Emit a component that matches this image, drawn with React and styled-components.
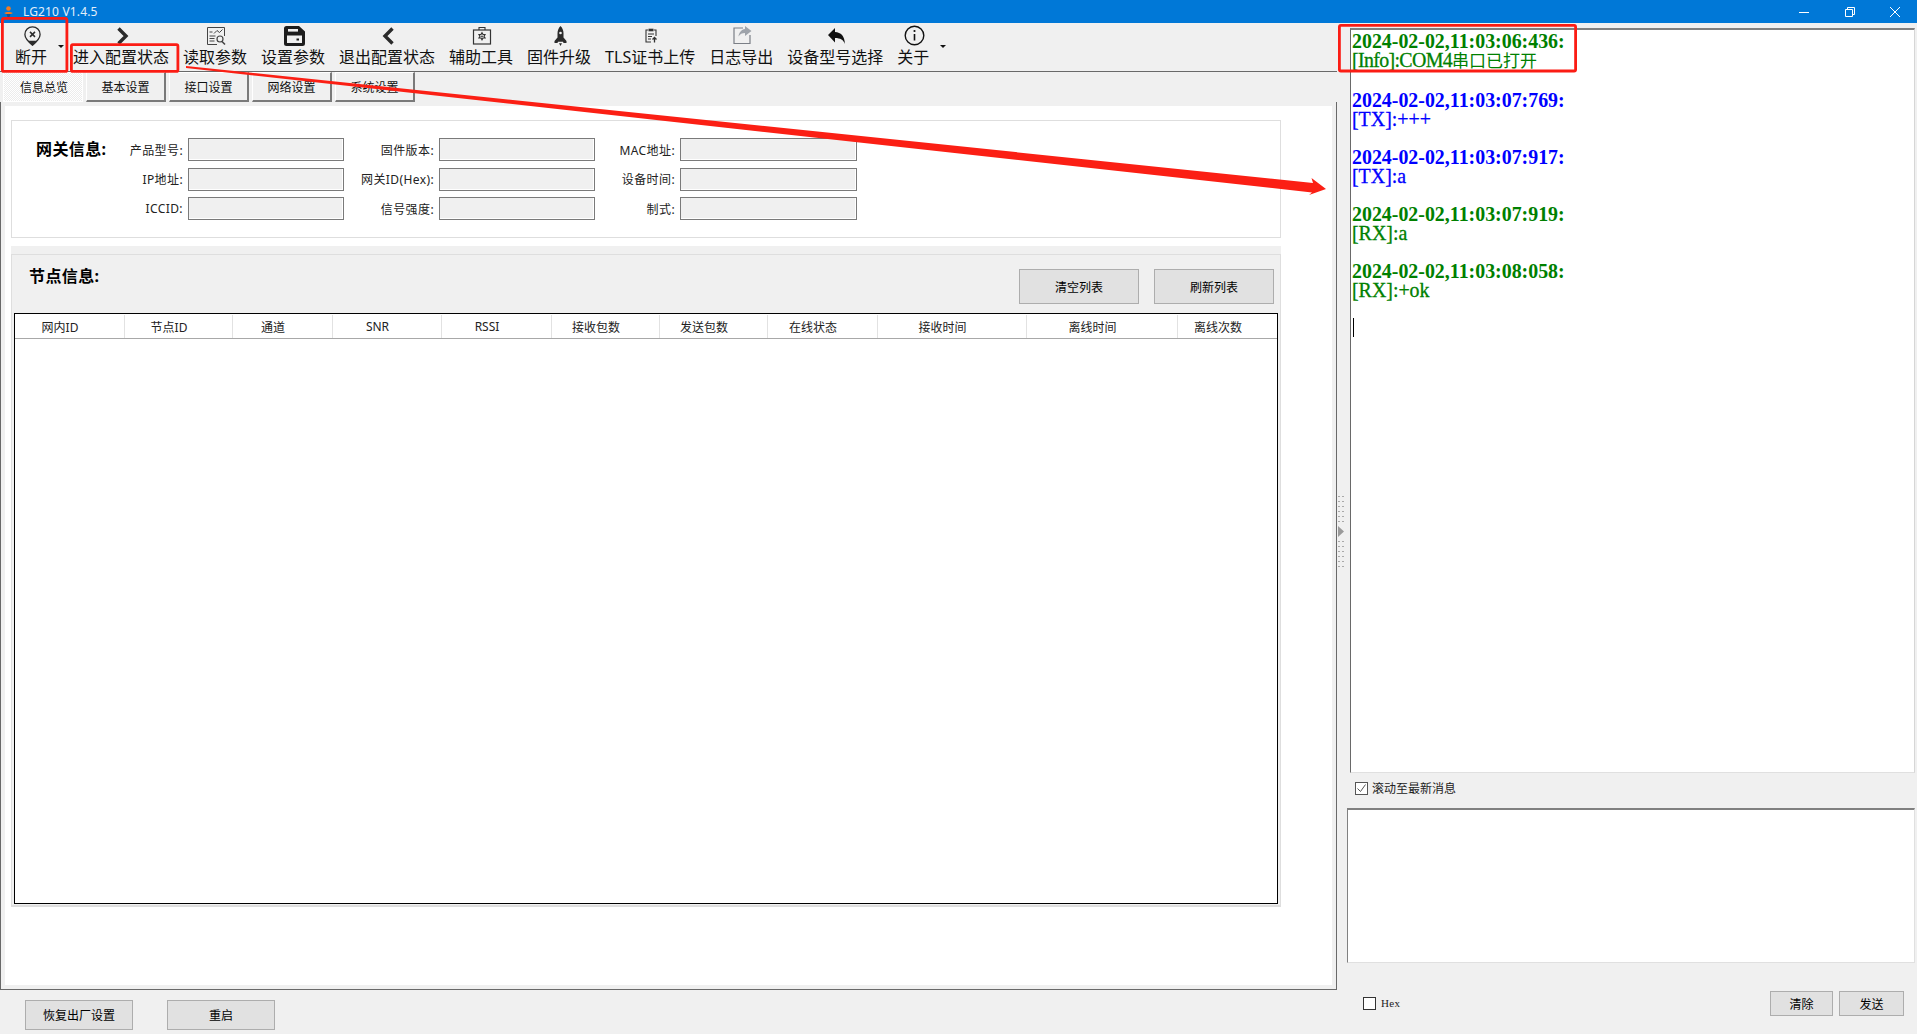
import React from "react";
import styled, { createGlobalStyle } from "styled-components";

const UI = `"Noto Sans", "Noto Sans CJK SC", sans-serif`;

const Global = createGlobalStyle`
  html, body { margin: 0; padding: 0; overflow: hidden; background: #f0f0f0; }
  * { box-sizing: border-box; }
`;

const Window = styled.div`
  position: relative;
  width: 1917px;
  height: 1034px;
  display: flex;
  flex-direction: column;
  background: #f0f0f0;
  font-family: ${UI};
  color: #000;
  overflow: hidden;
`;

/* ---------- title bar ---------- */
const TitleBar = styled.header`
  height: 23px;
  flex: none;
  display: flex;
  align-items: center;
  background: #0078d7;
  padding-left: 4px;
`;
const TitleText = styled.span`
  margin-left: 10px;
  font-size: 12px;
  line-height: 23px;
  letter-spacing: 0.15px;
  color: #e3effa;
`;
const WindowButtons = styled.div`
  margin-left: auto;
  display: flex;
  gap: 35.5px;
  padding-right: 17px;
`;
const WinIcon = styled.svg`
  width: 10px;
  height: 10px;
  display: block;
  fill: none;
  stroke: #fff;
  stroke-width: 1;
`;

/* ---------- main layout ---------- */
const Body = styled.div`
  flex: 1;
  display: flex;
  min-height: 0;
`;
const LeftPane = styled.section`
  width: 1337px;
  flex: none;
  display: flex;
  flex-direction: column;
`;
const RightPane = styled.section`
  flex: 1;
  display: flex;
  flex-direction: column;
  min-width: 0;
`;

/* ---------- toolbar ---------- */
const Toolbar = styled.nav`
  height: 49px;
  flex: none;
  display: flex;
  align-items: flex-start;
  gap: 14px;
  padding: 2px 0 0 15px;
  border-bottom: 1px solid #696969;
`;
const ToolItem = styled.div`
  display: flex;
  flex-direction: column;
  align-items: center;
  white-space: nowrap;
`;
const ToolIconSlot = styled.div`
  height: 21px;
  padding-left: 2px;
  display: flex;
  align-items: center;
  justify-content: center;
`;
const ToolLabel = styled.span`
  font-size: 16px;
  line-height: 22px;
  color: #111;
`;
const Caret = styled.span`
  width: 0;
  height: 0;
  margin: 20px -5px 0 -3px;
  border-left: 3px solid transparent;
  border-right: 3px solid transparent;
  border-top: 3px solid #111;
`;
const Glyph = styled.svg`
  display: block;
`;

/* ---------- tabs ---------- */
const TabStrip = styled.div`
  height: 30px;
  flex: none;
  display: flex;
  gap: 3px;
  padding-left: 3px;
`;
const Tab = styled.div`
  width: 80px;
  height: 30px;
  display: flex;
  align-items: center;
  justify-content: center;
  padding-left: ${(p) => (p.$active ? "2px" : "0")};
  font-size: 12px;
  color: #111;
  background: ${(p) =>
    p.$active
      ? "repeating-conic-gradient(#fff 0 25%, #ececec 0 50%) 0 0 / 2px 2px"
      : "#f0f0f0"};
  border-top: 1px solid #fff;
  border-left: 1px solid #fff;
  border-right: ${(p) => (p.$active ? "1px solid #fff" : "2px solid #7a7a7a")};
  border-bottom: ${(p) => (p.$active ? "1px solid #fff" : "2px solid #7a7a7a")};
`;

/* ---------- content panel ---------- */
const Panel = styled.main`
  height: 888px;
  flex: none;
  padding: 4px 4px 4px 4px;
  border: 1px solid #696969;
  border-top: none;
`;
const PanelSheet = styled.div`
  height: 100%;
  background: #fff;
  padding: 14px 51px 0 6px;
  display: flex;
  flex-direction: column;
  gap: 8px;
`;

const GatewayBox = styled.div`
  height: 118px;
  flex: none;
  display: flex;
  padding: 17px 0 0 24px;
  border: 1px solid #dedede;
`;
const GroupTitle = styled.h2`
  margin: -1px 0 0;
  font-size: 16px;
  font-weight: 700;
  line-height: 24px;
  letter-spacing: 0.4px;
  white-space: nowrap;
  color: #000;
`;
const GatewayTitleCell = styled.div`
  width: 79px;
  flex: none;
`;
const FieldGrid = styled.div`
  display: grid;
  grid-template-columns: 73px 156px 95px 156px 85px 177px;
  grid-auto-rows: 23px;
  row-gap: 6.5px;
`;
const FieldLabel = styled.label`
  display: flex;
  align-items: center;
  justify-content: flex-end;
  padding-right: 5px;
  font-size: 12px;
  letter-spacing: 0.4px;
  white-space: nowrap;
  color: #222;
`;
const FieldInput = styled.div`
  background: #f0f0f0;
  border: 1px solid #7a7a7a;
  box-shadow: inset -1px -1px 0 #fff;
`;

const NodeSection = styled.div`
  height: 661px;
  flex: none;
  padding-top: 8px;
  background: #f0f0f0;
`;
const NodeInner = styled.div`
  height: 100%;
  padding: 0 2px 1px 2px;
  border: 1px solid #dedede;
  border-bottom: 2px solid #dedede;
  display: flex;
  flex-direction: column;
`;
const NodeHead = styled.div`
  height: 58px;
  flex: none;
  display: flex;
  align-items: flex-start;
  padding: 10px 4px 0 15px;
`;
const NodeButtons = styled.div`
  margin-left: auto;
  display: flex;
  gap: 15px;
  margin-top: 4px;
`;
const ActionButton = styled.button`
  width: ${(p) => p.$w}px;
  height: ${(p) => p.$h}px;
  padding: 0;
  background: #e1e1e1;
  border: 1px solid #adadad;
  border-radius: 0;
  font-family: ${UI};
  font-size: 12px;
  color: #000;
`;
const NodeTable = styled.div`
  flex: 1;
  background: #fff;
  border: 1px solid #000;
  padding-top: 1px;
`;
const HeaderRow = styled.div`
  height: 24px;
  display: grid;
  grid-template-columns: 110px 108px 100px 109px 110px 108px 108px 110px 149px 151px 1fr;
  border-bottom: 1px solid #a8a8a8;
`;
const HeaderCell = styled.div`
  display: flex;
  align-items: center;
  justify-content: center;
  padding-right: 19px;
  font-size: 12px;
  color: #222;
  border-right: 1px solid #e2e2e2;
  &:last-child { border-right: none; }
`;

/* ---------- left footer ---------- */
const LeftFooter = styled.footer`
  flex: 1;
  display: flex;
  gap: 34px;
  padding: 10px 0 0 25px;
`;

/* ---------- right side ---------- */
const LogRow = styled.div`
  height: 750px;
  flex: none;
  display: flex;
  padding-top: 5px;
`;
const Splitter = styled.div`
  width: 13px;
  flex: none;
  padding-top: 468px;
`;
const Log = styled.div`
  flex: 1;
  margin-right: 2px;
  padding: 2px 0 0 1px;
  background: #fff;
  border-top: 2px solid #808080;
  border-left: 1px solid #696969;
  border-right: 1px solid #d6d6d6;
  border-bottom: 1px solid #e0e0e0;
  font-family: "Liberation Serif", "Noto Sans CJK SC", serif;
  font-size: 19.9px;
  line-height: 19px;
`;
const Entry = styled.div`
  margin-top: 19px;
  color: ${(p) => (p.$tx ? "#0000ff" : "#008000")};
  white-space: nowrap;
  &:first-child { margin-top: 0; }
  &:nth-child(2) { margin-top: 21px; }
`;
const Stamp = styled.div`
  font-weight: 700;
`;
const Message = styled.div`
  -webkit-text-stroke: 0.3px currentColor;
  letter-spacing: ${(p) => (p.$tight ? "-0.65px" : "0")};
`;
const CjkRun = styled.span`
  font-family: "Noto Sans CJK SC", sans-serif;
  font-size: 17px;
  line-height: 0;
  letter-spacing: 0;
  -webkit-text-stroke: 0;
`;
const Cursor = styled.div`
  width: 1px;
  height: 19px;
  margin: 18px 0 0 1px;
  background: #000;
`;
const ScrollRow = styled.div`
  height: 35px;
  flex: none;
  display: flex;
  align-items: flex-start;
  gap: 4px;
  padding: 9px 0 0 18px;
`;
const CheckBox = styled.span`
  width: 13px;
  height: 13px;
  flex: none;
  background: #fff;
  border: 1px solid ${(p) => (p.$checked ? "#555" : "#333")};
  display: flex;
  align-items: center;
  justify-content: center;
`;
const CheckText = styled.span`
  font-size: 12px;
  line-height: 13px;
  color: #222;
`;
const SendBox = styled.div`
  height: 155px;
  flex: none;
  margin: 0 2px 0 10px;
  background: #fff;
  border-top: 2px solid #808080;
  border-left: 1px solid #808080;
  border-right: 1px solid #e0e0e0;
  border-bottom: 1px solid #e0e0e0;
`;
const SendRow = styled.div`
  flex: 1;
  display: flex;
  align-items: flex-start;
  padding: 28px 13px 0 26px;
`;
const HexOption = styled.div`
  display: flex;
  align-items: center;
  gap: 5px;
  padding-top: 6px;
`;
const HexText = styled.span`
  font-family: "Liberation Serif", serif;
  font-size: 11px;
  line-height: 13px;
  letter-spacing: 0.3px;
  color: #222;
`;
const SendButtons = styled.div`
  margin-left: auto;
  display: flex;
  gap: 6px;
`;

/* ---------- annotations ---------- */
const Annotations = styled.svg`
  position: absolute;
  left: 0;
  top: 0;
  width: 1917px;
  height: 1034px;
  pointer-events: none;
`;

/* ---------- icons ---------- */
const ink = "#2b2b2b";
const icons = {
  pin: (
    <Glyph width="17" height="20" viewBox="0 0 17 20" fill="none" stroke={ink}>
      <path strokeWidth="1.300" d="M8.500.8a7.600 7.600 0 0 1 7.600 7.600c0 3.400-3.600 7.400-7.600 10.800C4.500 15.800.9 11.800.9 8.400A7.600 7.600 0 0 1 8.500.8z" />
      <path fill={ink} stroke="none" d="M4.200 14.800h8.600L8.500 19.500z" />
      <path strokeWidth="1.500" d="M6 5.900l5 5M11 5.900l-5 5" />
    </Glyph>
  ),
  next: (
    <Glyph width="13" height="18" viewBox="0 0 13 18" fill="none" stroke={ink}>
      <path strokeWidth="3.400" d="M2.500 1.500l7.500 7.500-7.500 7.500" />
    </Glyph>
  ),
  report: (
    <Glyph width="20" height="20" viewBox="0 0 20 20" fill="none" stroke="#444">
      <path strokeWidth="1" d="M11 18.500H1.500v-17h17V10" />
      <path strokeWidth="1" d="M8 7.500l3-3 2.500 2 3-3" />
      <path strokeWidth="1" d="M3.500 6h3M3.500 10h6M3.500 12.500h5M3.500 15h5" />
      <circle cx="14" cy="13" r="3" strokeWidth="1.200" />
      <path strokeWidth="1.600" d="M16 15.500l3 3" />
    </Glyph>
  ),
  save: (
    <Glyph width="21" height="20" viewBox="0 0 21 20">
      <path fill="#1d1d1d" d="M2.500 0H15l6 5.500v12a2.500 2.500 0 0 1-2.500 2.500h-16A2.500 2.500 0 0 1 0 17.500v-15A2.500 2.500 0 0 1 2.500 0z" />
      <rect x="4" y="3" width="10" height="2.600" fill="#f0f0f0" />
      <rect x="3" y="9.500" width="15" height="7.500" fill="#f0f0f0" />
      <rect x="12.500" y="12.500" width="2.500" height="2" fill="#1d1d1d" />
    </Glyph>
  ),
  prev: (
    <Glyph width="13" height="18" viewBox="0 0 13 18" fill="none" stroke={ink}>
      <path strokeWidth="3.400" d="M10.500 1.500L3 9l7.500 7.500" />
    </Glyph>
  ),
  tools: (
    <Glyph width="20" height="19" viewBox="0 0 20 19" fill="none" stroke="#333">
      <path strokeWidth="1.100" d="M7 4V1.500h6V4" />
      <rect x="1.500" y="4" width="17" height="14" strokeWidth="1.200" />
      <path strokeWidth="1.200" d="M10 6.800l1 1.700h2l-1 1.800 1 1.700h-2l-1 1.700-1-1.700H7l1-1.700-1-1.800h2z" />
      <circle cx="10" cy="10.300" r="0.900" fill="#333" stroke="none" />
    </Glyph>
  ),
  rocket: (
    <Glyph width="13" height="20" viewBox="0 0 13 20">
      <path fill="#2a2a2a" d="M6.500 0c2 2 3 4.500 3 7.500v4l3 3.500v2H9.500l-.5-1.200H4L3.500 17H.5v-2l3-3.500v-4C3.500 4.500 4.500 2 6.500 0z" />
      <circle cx="6.500" cy="7" r="1.300" fill="#f0f0f0" />
      <path fill="#2a2a2a" d="M5 17.200h3L6.500 20z" />
    </Glyph>
  ),
  cert: (
    <Glyph width="12" height="15" viewBox="0 0 12 15" fill="none" stroke="#333">
      <path strokeWidth="1.100" d="M3 2H1v12h5M9 2h2v6" />
      <rect x="3.500" y="0.700" width="5" height="2.600" fill="#333" stroke="none" />
      <path strokeWidth="1" d="M3 6h6M3 8.500h4M3 11h3" />
      <path strokeWidth="1.300" d="M9.500 9.500v5M7.500 11.500l2-2 2 2" />
    </Glyph>
  ),
  export: (
    <Glyph width="19" height="19" viewBox="0 0 19 19" fill="none">
      <path stroke="#7b7f86" strokeWidth="1.200" d="M10 2H1v15.500h16V9" />
      <path fill="#9ea3aa" d="M12 0l6.500 5-6.500 5V7C9 7 7 8 5.500 10.500 6 6.500 8.500 3.500 12 3z" />
    </Glyph>
  ),
  back: (
    <Glyph width="17" height="16" viewBox="0 0 17 16">
      <path fill="#111" d="M7 0v4c6 .3 9.500 4 10 12-1.500-4-4.500-6-10-6v4.500L0 7z" />
    </Glyph>
  ),
  info: (
    <Glyph width="21" height="21" viewBox="0 0 21 21" fill="none" stroke="#111">
      <circle cx="10.500" cy="10.500" r="9.300" strokeWidth="1.400" />
      <circle cx="10.500" cy="6" r="1.100" fill="#111" stroke="none" />
      <path strokeWidth="1.600" d="M10.500 9v6.500" />
    </Glyph>
  ),
};

const tools = [
  { key: "pin", label: "断开", caret: true },
  { key: "next", label: "进入配置状态" },
  { key: "report", label: "读取参数" },
  { key: "save", label: "设置参数" },
  { key: "prev", label: "退出配置状态" },
  { key: "tools", label: "辅助工具" },
  { key: "rocket", label: "固件升级" },
  { key: "cert", label: "TLS证书上传" },
  { key: "export", label: "日志导出" },
  { key: "back", label: "设备型号选择" },
  { key: "info", label: "关于", caret: true },
];

const tabs = ["信息总览", "基本设置", "接口设置", "网络设置", "系统设置"];

const fields = [
  "产品型号:", "固件版本:", "MAC地址:",
  "IP地址:", "网关ID(Hex):", "设备时间:",
  "ICCID:", "信号强度:", "制式:",
];

const columns = ["网内ID", "节点ID", "通道", "SNR", "RSSI", "接收包数", "发送包数", "在线状态", "接收时间", "离线时间", "离线次数"];

const logs = [
  { stamp: "2024-02-02,11:03:06:436:", body: <>[Info]:COM4<CjkRun>串口已打开</CjkRun></>, tight: true },
  { stamp: "2024-02-02,11:03:07:769:", body: "[TX]:+++", tx: true },
  { stamp: "2024-02-02,11:03:07:917:", body: "[TX]:a", tx: true },
  { stamp: "2024-02-02,11:03:07:919:", body: "[RX]:a" },
  { stamp: "2024-02-02,11:03:08:058:", body: "[RX]:+ok" },
];

const SplitterGrip = () => (
  <Glyph width="8" height="71" viewBox="0 0 8 71">
    {[0, 5, 10, 15, 20, 25, 45, 50, 55, 60, 65, 70].map((y) => (
      <g key={y} fill="#a9a9a9">
        <rect x="1" y={y} width="2" height="1" />
        <rect x="5" y={y} width="2" height="1" />
      </g>
    ))}
    <path fill="#9a9a9a" d="M1 30l6 5.500L1 41z" />
  </Glyph>
);

export default function App() {
  return (
    <Window>
      <Global />
      <TitleBar>
        <Glyph width="9" height="11" viewBox="0 0 9 11">
          <circle cx="4.500" cy="2.500" r="2.300" fill="#f47a20" />
          <path fill="#f47a20" d="M0 7c2-1.500 7-1.500 9 0l-2 1H2z" />
          <path fill="#1c4f8c" d="M2.500 8h4L5.500 11h-2z" />
        </Glyph>
        <TitleText>LG210 V1.4.5</TitleText>
        <WindowButtons>
          <WinIcon viewBox="0 0 10 10"><path d="M0 5.500h10" /></WinIcon>
          <WinIcon viewBox="0 0 10 10"><path d="M.5 2.500h7v7h-7zM2.500 2.500V.5h7v7h-2" /></WinIcon>
          <WinIcon viewBox="0 0 10 10"><path d="M0 0l10 10M10 0L0 10" /></WinIcon>
        </WindowButtons>
      </TitleBar>

      <Body>
        <LeftPane>
          <Toolbar>
            {tools.map((t) => (
              <React.Fragment key={t.label}>
                <ToolItem>
                  <ToolIconSlot>{icons[t.key]}</ToolIconSlot>
                  <ToolLabel>{t.label}</ToolLabel>
                </ToolItem>
                {t.caret && <Caret />}
              </React.Fragment>
            ))}
          </Toolbar>

          <TabStrip>
            {tabs.map((t, i) => (
              <Tab key={t} $active={i === 0}>{t}</Tab>
            ))}
          </TabStrip>

          <Panel>
            <PanelSheet>
              <GatewayBox>
                <GatewayTitleCell>
                  <GroupTitle>网关信息:</GroupTitle>
                </GatewayTitleCell>
                <FieldGrid>
                  {fields.map((f) => (
                    <React.Fragment key={f}>
                      <FieldLabel>{f}</FieldLabel>
                      <FieldInput />
                    </React.Fragment>
                  ))}
                </FieldGrid>
              </GatewayBox>

              <NodeSection>
                <NodeInner>
                  <NodeHead>
                    <GroupTitle>节点信息:</GroupTitle>
                    <NodeButtons>
                      <ActionButton $w={120} $h={35}>清空列表</ActionButton>
                      <ActionButton $w={120} $h={35}>刷新列表</ActionButton>
                    </NodeButtons>
                  </NodeHead>
                  <NodeTable>
                    <HeaderRow>
                      {columns.map((c) => (
                        <HeaderCell key={c}>{c}</HeaderCell>
                      ))}
                    </HeaderRow>
                  </NodeTable>
                </NodeInner>
              </NodeSection>
            </PanelSheet>
          </Panel>

          <LeftFooter>
            <ActionButton $w={108} $h={30}>恢复出厂设置</ActionButton>
            <ActionButton $w={108} $h={30}>重启</ActionButton>
          </LeftFooter>
        </LeftPane>

        <RightPane>
          <LogRow>
            <Splitter>
              <SplitterGrip />
            </Splitter>
            <Log>
              {logs.map((l) => (
                <Entry key={l.stamp} $tx={l.tx}>
                  <Stamp>{l.stamp}</Stamp>
                  <Message $tight={l.tight}>{l.body}</Message>
                </Entry>
              ))}
              <Cursor />
            </Log>
          </LogRow>

          <ScrollRow>
            <CheckBox $checked>
              <Glyph width="11" height="11" viewBox="0 0 11 11" fill="none" stroke="#555" strokeWidth="1">
                <path d="M1.500 5.500l3 3 5-7" />
              </Glyph>
            </CheckBox>
            <CheckText>滚动至最新消息</CheckText>
          </ScrollRow>

          <SendBox />

          <SendRow>
            <HexOption>
              <CheckBox />
              <HexText>Hex</HexText>
            </HexOption>
            <SendButtons>
              <ActionButton $w={63} $h={25}>清除</ActionButton>
              <ActionButton $w={65} $h={25}>发送</ActionButton>
            </SendButtons>
          </SendRow>
        </RightPane>
      </Body>

      <Annotations viewBox="0 0 1917 1034">
        <g fill="none" stroke="#fb1c14" strokeWidth="2.800">
          <rect x="2.400" y="18.400" width="64.500" height="53" rx="1.500" />
          <rect x="71.400" y="44.700" width="106.500" height="26.700" rx="1.500" />
          <rect x="1339.400" y="25.400" width="236.200" height="45.600" rx="1.500" />
        </g>
        <path
          fill="#fb1f14"
          d="M186 66L1313 183 1311.500 178 1326 189 1309 195 1312 192.500 186 68z"
        />
      </Annotations>
    </Window>
  );
}
